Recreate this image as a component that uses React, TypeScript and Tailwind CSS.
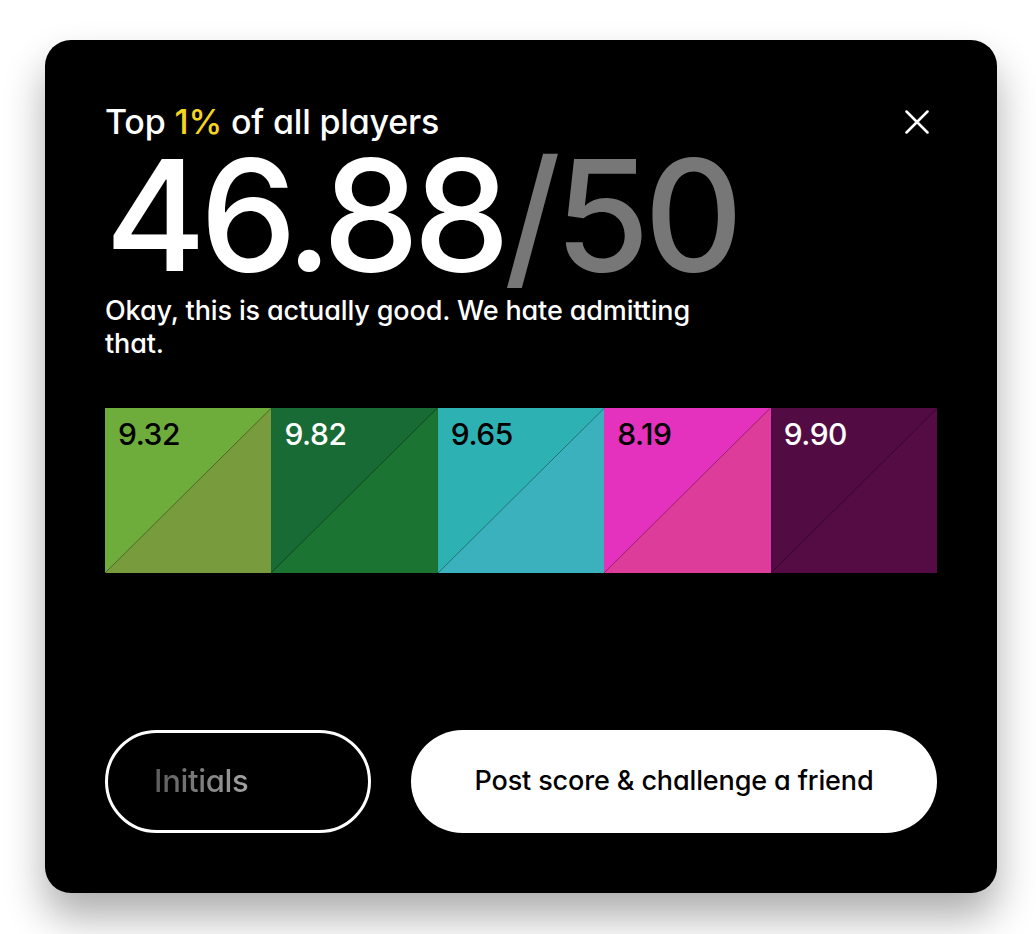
const scores = [
  { value: '9.32', a: '#6eac3b', b: '#779b3d', text: 'text-black' },
  { value: '9.82', a: '#186b34', b: '#1c7432', text: 'text-white' },
  { value: '9.65', a: '#2eb1b3', b: '#3ab1bc', text: 'text-black' },
  { value: '8.19', a: '#e431be', b: '#dd3c9b', text: 'text-black' },
  { value: '9.90', a: '#530b44', b: '#550c45', text: 'text-white' },
]

function Swatch({ value, a, b, text }: { value: string; a: string; b: string; text: string }) {
  return (
    <div className="relative h-full flex-1 overflow-hidden" style={{ backgroundColor: a }}>
      {/* triangulo inferior derecho */}
      <svg className="absolute inset-0 h-full w-full" viewBox="0 0 100 100" preserveAspectRatio="none">
        <polygon points="0,100 100,0 100,100" fill={b} />
        <line x1="0" y1="100" x2="100" y2="0" stroke="rgba(0,0,0,0.35)" strokeWidth="1" vectorEffect="non-scaling-stroke" />
      </svg>
      <span className={`relative block pl-[13px] pt-[8px] text-[30px] font-medium leading-9 tracking-[-0.015em] ${text}`}>
        {value}
      </span>
    </div>
  )
}

export default function App() {
  return (
    <div className="min-h-[934px] bg-white pl-[45px] pt-[40px] font-['Inter','Liberation_Sans',sans-serif] [font-feature-settings:'cv11']">
      <div className="flex h-[853px] w-[952px] flex-col rounded-[26px] bg-black px-[60px] pb-[60px] pt-[64px] shadow-[0_24px_40px_rgba(0,0,0,0.32)]">
        {/* Encabezado */}
        <div className="flex items-start justify-between">
          <p className="text-[34px] font-medium leading-9 tracking-[-0.005em] text-white">
            Top <span className="text-[#f5d61f]">1%</span> of all players
          </p>
          <button className="mr-[8px] mt-[6px] text-white">
            <svg width="24" height="24" viewBox="0 0 24 24" fill="none" stroke="currentColor" strokeWidth="2.5" strokeLinecap="round">
              <path d="M1.5 1.5 22.5 22.5M22.5 1.5 1.5 22.5" />
            </svg>
          </button>
        </div>

        <h1 className="-mt-[2px] text-[154px] font-medium leading-none tracking-[-0.04em] text-white">
          46.88<span className="text-[#777777]">/50</span>
        </h1>

        <p className="mt-[2px] max-w-[600px] text-[27px] font-medium leading-[33px] tracking-[-0.005em] text-white">
          Okay, this is actually good. We hate admitting that.
        </p>

        {/* Puntuaciones por ronda */}
        <div className="mt-[48px] flex h-[165px]">
          {scores.map((s) => (
            <Swatch key={s.value} {...s} />
          ))}
        </div>

        <div className="mt-auto flex gap-10">
          <div className="flex h-[103px] w-[266px] items-center rounded-full border-[3px] border-white pl-[46px]">
            <span className="bg-gradient-to-r from-[#5c5c5c] to-[#a3a3a3] bg-clip-text text-[31px] font-medium tracking-[-0.01em] text-transparent">
              Initials
            </span>
          </div>
          <button className="flex h-[103px] flex-1 items-center justify-center rounded-full bg-white text-[27px] font-medium tracking-[-0.005em] text-black">
            Post score &amp; challenge a friend
          </button>
        </div>
      </div>
    </div>
  )
}
